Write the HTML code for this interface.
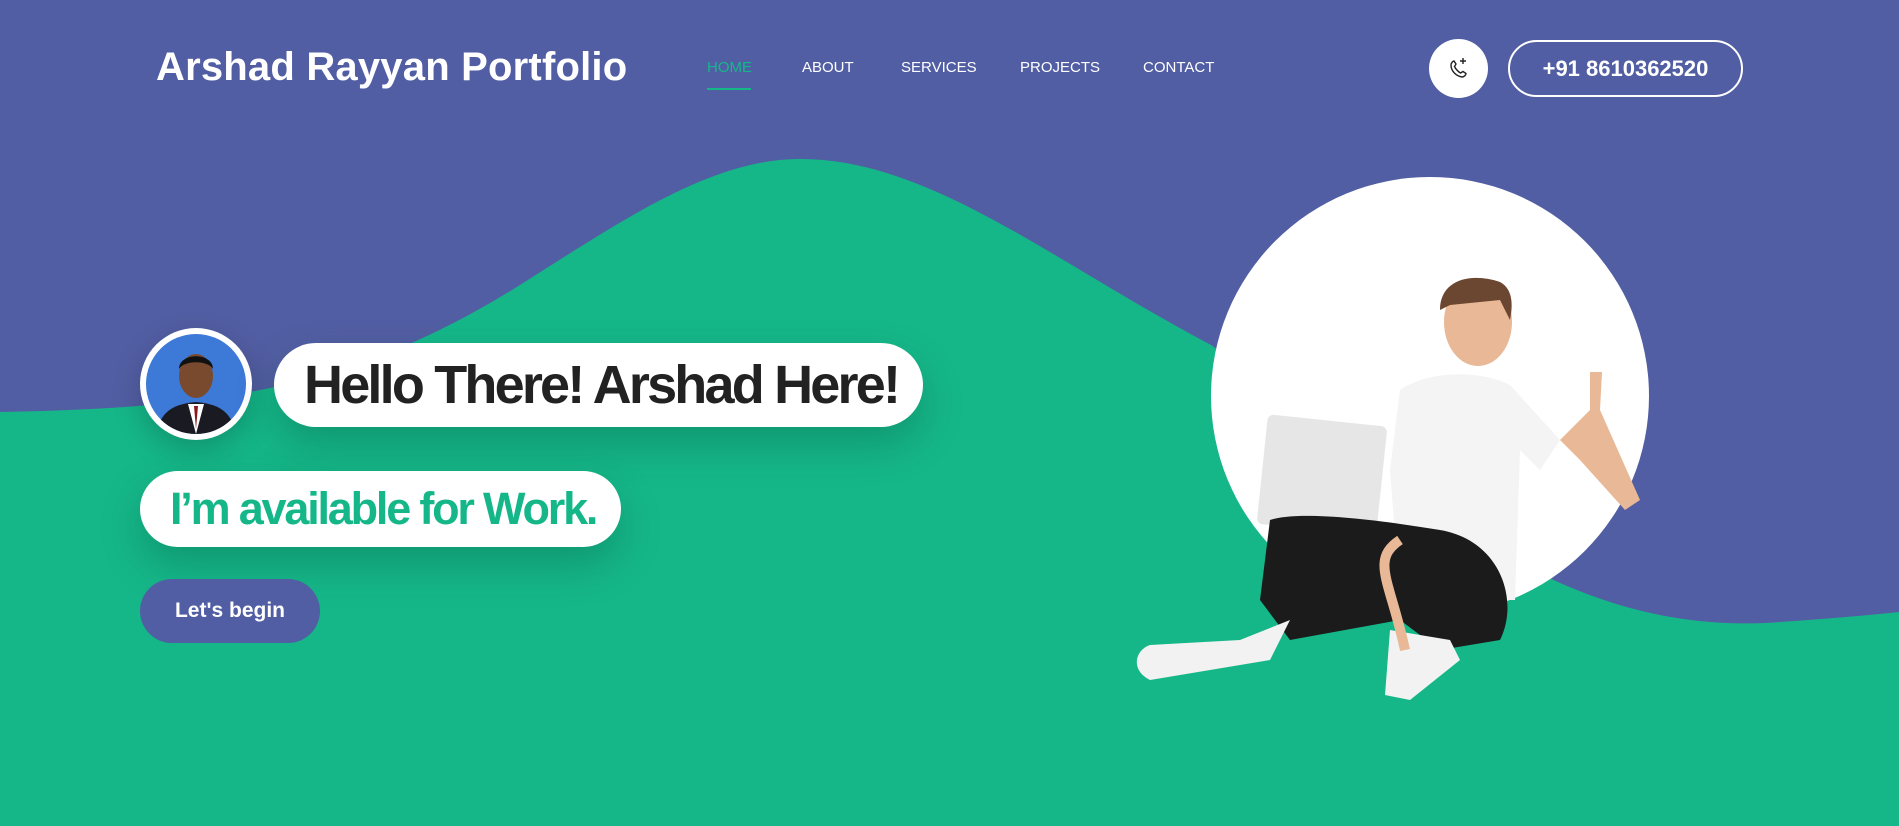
<!DOCTYPE html>
<html><head><meta charset="utf-8"><style>
*{margin:0;padding:0;box-sizing:border-box}
body{width:1899px;height:826px;overflow:hidden;background:#525ea3;font-family:"Liberation Sans",sans-serif;position:relative}
.abs{position:absolute}
.logo{left:156px;top:45px;color:#fff;font-size:40px;font-weight:bold;letter-spacing:0.2px}
.nav{top:59px;color:#fff;font-size:15px}
.pill{background:#fff;border-radius:45px;box-shadow:0 18px 40px rgba(0,60,40,.25)}
</style></head><body>
<svg class="abs" style="left:0;top:0" width="1899" height="826">
<path d="M0,412 C230,408 360,385 520,285 C620,222 710,159 800,159 C930,159 1050,260 1211,345 C1400,480 1550,640 1780,622 C1840,618 1880,614 1899,612 L1899,826 L0,826 Z" fill="#15b789"/>
<circle cx="1430" cy="396" r="219" fill="#fff"/>
<rect x="1262" y="420" width="120" height="110" rx="6" fill="#e6e6e6" transform="rotate(6 1320 475)"/>
<path d="M1400,390 C1430,370 1480,370 1510,385 L1560,440 L1540,470 L1520,450 L1515,600 L1400,600 L1390,470 Z" fill="#f4f4f4"/>
<ellipse cx="1478" cy="322" rx="34" ry="44" fill="#e9b896"/>
<path d="M1440,310 C1440,280 1470,272 1500,282 C1515,290 1512,310 1510,320 L1500,300 L1450,305 Z" fill="#6b4630"/>
<path d="M1560,440 L1590,410 L1590,372 L1602,372 L1600,410 L1640,500 L1625,510 L1580,460 Z" fill="#e9b896"/>
<path d="M1270,520 C1300,510 1380,520 1440,530 C1500,540 1520,600 1500,640 L1440,650 L1400,620 L1290,640 L1260,600 Z" fill="#1b1b1b"/>
<path d="M1240,640 L1290,620 L1270,660 L1150,680 C1130,670 1135,650 1150,645 Z" fill="#f2f2f2"/>
<path d="M1390,630 L1450,640 L1460,660 L1410,700 L1385,695 Z" fill="#f2f2f2"/>
<path d="M1405,650 C1390,580 1370,560 1400,540" stroke="#e9b896" stroke-width="10" fill="none"/>
</svg>
<div class="abs logo">Arshad Rayyan Portfolio</div>
<div class="abs nav" style="left:707px;color:#15b789">HOME</div>
<div class="abs" style="left:707px;top:88px;width:44px;height:2px;background:#15b789"></div>
<div class="abs nav" style="left:802px">ABOUT</div>
<div class="abs nav" style="left:901px">SERVICES</div>
<div class="abs nav" style="left:1020px">PROJECTS</div>
<div class="abs nav" style="left:1143px">CONTACT</div>
<div class="abs" style="left:1429px;top:39px;width:59px;height:59px;border-radius:50%;background:#fff">
<svg width="59" height="59" viewBox="0 0 59 59"><path d="M22,26 C22,24 24,22 25,22 L27,25 L25.5,27.5 C27,30.5 29,32.5 31.5,34 L34,32.5 L37,34.5 C37,36 35,38 33,38 C27,37 22,32 22,26 Z" fill="none" stroke="#222" stroke-width="1.4"/><path d="M34,19 V25 M31,22 H37" stroke="#222" stroke-width="1.4"/></svg></div>
<div class="abs" style="left:1508px;top:40px;width:235px;height:57px;border:2px solid #fff;border-radius:30px;color:#fff;font-size:22px;font-weight:bold;text-align:center;line-height:53px">+91 8610362520</div>
<div class="abs" style="left:140px;top:328px;width:112px;height:112px;border-radius:50%;background:#fff;box-shadow:0 10px 30px rgba(0,0,0,.2);padding:6px">
<svg width="100" height="100" viewBox="0 0 100 100"><clipPath id="c"><circle cx="50" cy="50" r="50"/></clipPath><g clip-path="url(#c)"><rect width="100" height="100" fill="#3d7ad8"/><path d="M10,100 C15,75 30,70 50,68 C70,70 85,75 90,100 Z" fill="#1a1a22"/><path d="M42,70 L50,100 L58,70 Z" fill="#fff"/><path d="M48,72 L50,95 L52,72 Z" fill="#8a1a1a"/><ellipse cx="50" cy="42" rx="17" ry="22" fill="#7a4a2f"/><path d="M33,35 C33,18 67,18 67,35 C62,26 38,26 33,35 Z" fill="#111"/></g></svg></div>
<div class="abs pill" style="left:274px;top:343px;width:649px;height:84px;font-size:54px;font-weight:bold;color:#222;letter-spacing:-2.8px;line-height:84px;padding-left:30px">Hello There! Arshad Here!</div>
<div class="abs pill" style="left:140px;top:471px;width:481px;height:76px;font-size:45px;font-weight:bold;color:#15b789;letter-spacing:-2.2px;line-height:76px;padding-left:30px">I’m available for Work.</div>
<div class="abs" style="left:140px;top:579px;width:180px;height:64px;border-radius:32px;background:#525ea3;color:#fff;font-size:21px;font-weight:bold;text-align:center;line-height:64px">Let's begin</div>
</body></html>
